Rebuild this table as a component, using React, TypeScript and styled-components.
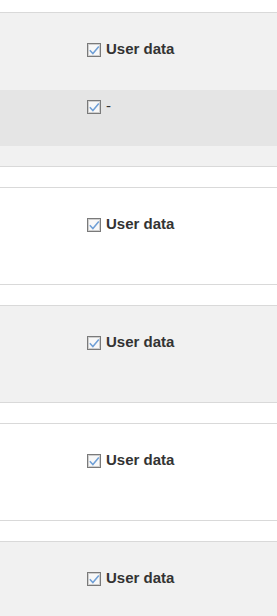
import styled, { createGlobalStyle } from 'styled-components'

const GlobalStyle = createGlobalStyle`
  html, body {
    margin: 0;
    padding: 0;
    background: #ffffff;
    font-family: "Liberation Sans", Arial, sans-serif;
    color: #333333;
  }
`

interface Entry {
  label: string
  details?: string[]
}

const entries: Entry[] = [
  { label: 'User data', details: ['-'] },
  { label: 'User data' },
  { label: 'User data' },
  { label: 'User data' },
  { label: 'User data' },
]

function CheckBox() {
  return (
    <Box width="14" height="14" viewBox="0 0 14 14" aria-hidden="true">
      <rect x="0.5" y="0.5" width="13" height="13" fill="#f8f8f8" stroke="#7a7a7a" />
      <rect x="1.5" y="1.5" width="11" height="11" fill="none" stroke="#cfcfcf" />
      <path d="M2.8 7.2 L5.9 10.6 L11.8 3.4" fill="none" stroke="#6f9fd6" strokeWidth="1.5" />
    </Box>
  )
}

export default function App() {
  return (
    <>
      <GlobalStyle />
      <List>
        {entries.map((entry, index) => (
          <Card key={index} $shaded={index % 2 === 0}>
            <Header>
              <CheckBox />
              <Title>{entry.label}</Title>
            </Header>
            {entry.details && (
              <Details>
                {entry.details.map((d, i) => (
                  <DetailRow key={i}>
                    <CheckBox />
                    <DetailText>{d}</DetailText>
                  </DetailRow>
                ))}
              </Details>
            )}
          </Card>
        ))}
      </List>
    </>
  )
}

const List = styled.div`
  display: flex;
  flex-direction: column;
  gap: 20px;
  padding-top: 12px;
  height: 604px;
  overflow: hidden;
`

const Card = styled.section<{ $shaded: boolean }>`
  flex-shrink: 0;
  border-top: 1px solid #d9d9d9;
  border-bottom: 1px solid #d9d9d9;
  background: ${({ $shaded }) => ($shaded ? '#f1f1f1' : '#ffffff')};
  padding: 27px 0 19px;
`

const Header = styled.div`
  display: flex;
  align-items: flex-end;
  gap: 5px;
  padding-left: 87px;
  height: 17px;
  margin-bottom: 33px;
`

const Box = styled.svg`
  display: block;
  flex-shrink: 0;
`

const Title = styled.span`
  font-size: 15px;
  font-weight: 700;
  line-height: 17px;
  color: #333333;
`

const Details = styled.div`
  background: #e5e5e5;
  height: 56px;
  box-sizing: border-box;
  padding: 7px 0 0 87px;
  margin-bottom: 1px;
`

const DetailRow = styled.div`
  display: flex;
  align-items: flex-end;
  gap: 5px;
  height: 17px;
`

const DetailText = styled.span`
  font-size: 15px;
  line-height: 17px;
  color: #333333;
`
